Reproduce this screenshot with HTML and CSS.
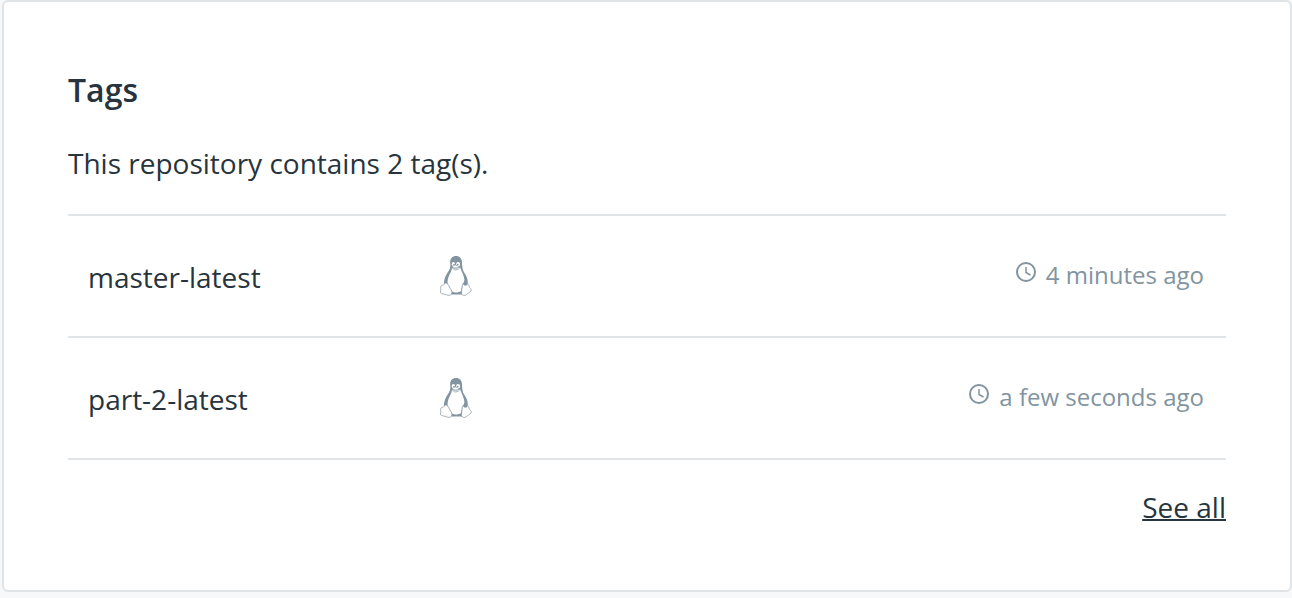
FILE: index.html
```
<!DOCTYPE html>
<html lang="en">
<head>
<meta charset="utf-8">
<title>Tags</title>
<link rel="stylesheet" href="styles.css">
</head>
<body>
<svg class="sprite" aria-hidden="true">
  <symbol id="linux" viewBox="0 0 32 40">
    <path class="tux-coat" d="M16 0C12.400 0 10 2.400 10.200 6.200C10.400 9.600 10.500 11.800 9.100 14.300C7.300 17.200 5 20.200 4.200 24.500C3.900 26.500 4 28.500 5 30L11 38.500H22L27.500 29C28.600 24.800 26.800 20.500 24.200 16.600C22.300 13.800 22.200 11 22 6.500C21.900 2.500 19.800 0 16 0Z"/>
    <path class="tux-belly" d="M12 11.500C11.800 15 9.900 17.500 8.700 20.500C7.400 24 7 27 8.500 29.500L12 35.500C14.500 37 18.500 36.800 21 35L22.500 28C23.600 26.500 24.400 26 24.400 23.500C24 19.500 21.300 15 20.100 11.500Z"/>
    <ellipse class="tux-belly" cx="13.400" cy="8.200" rx="1.700" ry="2.100"/>
    <ellipse class="tux-belly" cx="18.100" cy="8.200" rx="2" ry="2.200"/>
    <circle class="tux-coat" cx="14" cy="8.500" r=".8"/>
    <circle class="tux-coat" cx="17.700" cy="8.500" r=".8"/>
    <path class="tux-line" d="M12 10.800C13.500 9.400 15 8.800 16.200 9.200L20 10.800C20 12.500 17.500 14 15.600 14C14 14 12.400 12.600 12 10.800ZM12.300 11.300C14.500 13.200 17 12.600 19.600 11.200"/>
    <path class="tux-line" d="M5.500 27C7.500 26.800 8.500 29 9.500 31C10.500 33 12 34.500 11.900 36.500C11.800 39 9.500 39.800 7.500 39.200C5.500 38.400 3.500 38 1.500 37.500C.1 37 .4 35.500 .8 34C1 32.500 .1 31 1 30C2 29 3.500 29.500 4.200 28.300Z"/>
    <path class="tux-line" d="M22.200 29.500C22.300 27.500 23.200 27.600 23.500 28.300C24.200 30 26.800 29.500 27.800 27.800C29.200 28.300 28.800 30.500 29.800 31.800C30.800 33 32.200 33.600 31 35C29.500 36.500 28 37 26.500 38.500C25 40 22.300 39.800 21.600 37.800C21.200 35 22.300 32.500 22.200 29.500Z"/>
  </symbol>
  <symbol id="clock" viewBox="0 0 20 20">
    <path class="clock-line" d="M19 10A9 9 0 1 1 1 10A9 9 0 1 1 19 10Z"/>
    <path class="clock-hand" d="M10 5V10.500L14.500 13"/>
  </symbol>
</svg>
<main class="page">
  <section class="card">
    <h2 class="title">Tags</h2>
    <p class="summary">This repository contains 2 tag(s).</p>
    <table class="tags">
      <tbody>
        <tr>
          <td class="name">master-latest</td>
          <td class="os"><svg class="linux" role="img" aria-label="Linux"><use href="#linux"/></svg></td>
          <td class="updated"><span class="time"><svg class="clock" aria-hidden="true"><use href="#clock"/></svg>4 minutes ago</span></td>
        </tr>
        <tr>
          <td class="name">part-2-latest</td>
          <td class="os"><svg class="linux" role="img" aria-label="Linux"><use href="#linux"/></svg></td>
          <td class="updated"><span class="time"><svg class="clock" aria-hidden="true"><use href="#clock"/></svg>a few seconds ago</span></td>
        </tr>
      </tbody>
    </table>
    <div class="footer"><a class="see-all" href="#">See all</a></div>
  </section>
</main>
</body>
</html>
```
FILE: styles.css
```
* {
  box-sizing: border-box;
}

body {
  margin: 0;
  background: #f7f8f9;
  color: #27343d;
  font-family: "Open Sans", sans-serif;
  font-size: 28px;
  line-height: 40px;
}

.sprite {
  position: absolute;
  width: 0;
  height: 0;
}

.page {
  padding: 0 0 6px 2px;
}

.card {
  padding: 64px 64px 63px;
  border: 2px solid #e0e4e7;
  border-radius: 6px;
  background: #fff;
}

.title {
  margin: 0 0 29px;
  font-size: 32px;
  font-weight: 600;
  line-height: 48px;
}

.summary {
  margin: 0 0 31px;
}

.tags {
  width: 100%;
  border-spacing: 0;
  border-top: 2px solid #e0e4e7;
  table-layout: fixed;
}

.tags td {
  height: 122px;
  padding: 0;
  border-bottom: 2px solid #e0e4e7;
  vertical-align: middle;
}

.tags .name {
  width: 372px;
  padding: 2px 0 0 20px;
}

.tags .os {
  width: 80px;
}

.tags .updated {
  padding: 0 22px 2px 0;
}

.linux {
  display: block;
  width: 32px;
  height: 40px;
}

.tux-coat {
  fill: #8194a0;
}

.tux-belly {
  fill: #fff;
}

.tux-line {
  fill: #fff;
  stroke: #8194a0;
  stroke-width: 0.7;
}

.time {
  display: flex;
  align-items: flex-start;
  justify-content: flex-end;
  gap: 10px;
  color: #8194a0;
  font-size: 24px;
  line-height: 36px;
}

.clock {
  width: 20px;
  height: 20px;
  margin-top: 5px;
}

.clock-line,
.clock-hand {
  fill: none;
  stroke: #8194a0;
  stroke-width: 2;
}

.clock-hand {
  stroke-width: 1.5;
}

.footer {
  margin-top: 27px;
  text-align: right;
}

.see-all {
  color: inherit;
  text-decoration-thickness: 2px;
}
```
